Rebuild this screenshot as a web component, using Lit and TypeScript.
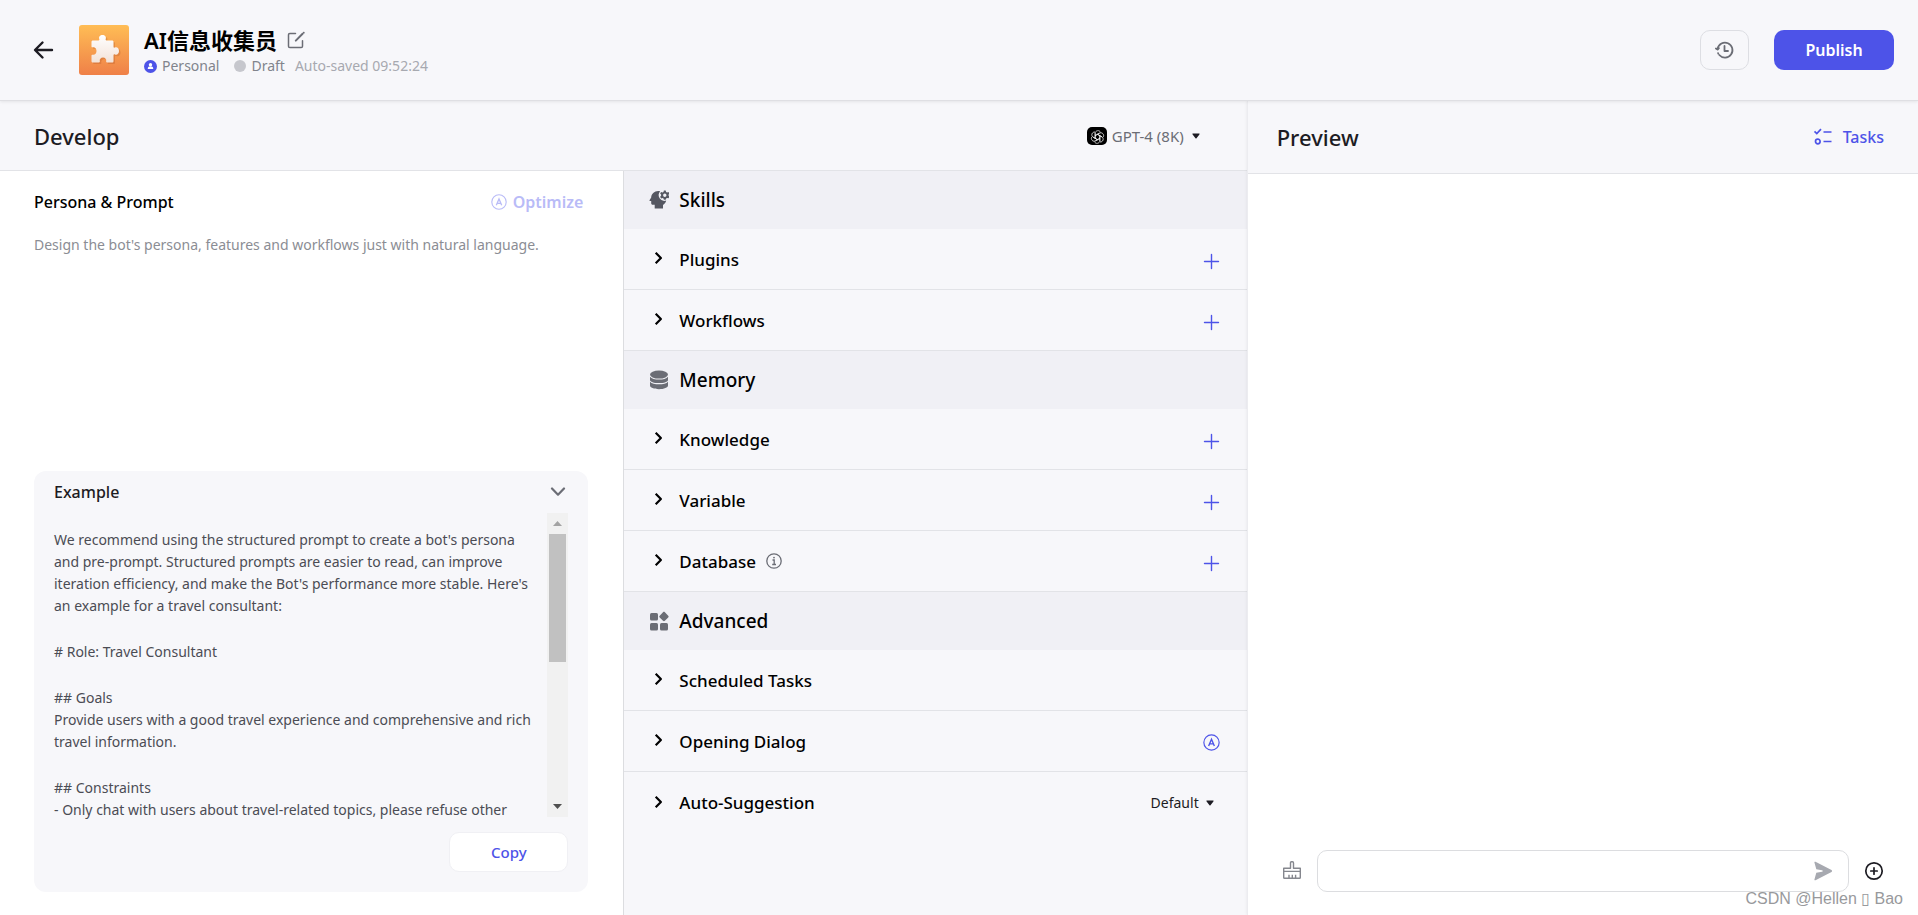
import { LitElement, html, css, svg, nothing } from "lit";
import { customElement, property, state } from "lit/decorators.js";

const circledA = (size: number) => html`<svg width=${size} height=${size} viewBox="0 0 16 16" fill="none" stroke="currentColor" aria-hidden="true">
  <circle cx="8" cy="8" r="7.2" stroke-width="1.1" />
  <path d="M5.3 11.2 8 4.9l2.7 6.3M6.3 9.3h3.4" stroke-width="1.3" />
</svg>`;

const caret = html`<svg class="caret" width="8" height="6" viewBox="0 0 8 6" aria-hidden="true"><path d="M1 .5h6c.6 0 .8.5.4.9L4.5 5.2c-.3.3-.7.3-1 0L.6 1.400C.2 1 .4.5 1 .5z" fill="#1d1c23" /></svg>`;

const skillsIcon = svg`
  <path fill="#555761" d="M9.300 1C5.300 1 2.200 4 2.200 7.600L.5 10.300c-.2.400 0 .700.400.700h1.300v2.300c0 .900.600 1.500 1.500 1.500h2V18.500h8.300v-3.500c1.700-1 2.900-2.600 3.200-4.400A5.800 5.800 0 0 1 11.200 1.200 7 7 0 0 0 9.300 1z" />
  <path fill="#555761" fill-rule="evenodd" d="M14.900.6h1.800l.4 1.400 1 .5 1.300-.6 1.100 1.500-.9 1.100v1.200l.9 1-1 1.600-1.400-.4-1 .6-.4 1.300h-1.800l-.4-1.400-1-.5-1.400.5-1-1.600 1-1.100V4.500l-1-1.100 1-1.500 1.400.5 1-.5zM15.800 3.500a1.700 1.700 0 1 0 0 3.400 1.700 1.700 0 0 0 0-3.400z" />`;

const memoryIcon = svg`
  <g fill="#6b6d75">
    <ellipse cx="10" cy="4.600" rx="9" ry="4" />
    <path d="M1 6.800c1.500 2 5 2.800 9 2.800s7.500-.8 9-2.800v3.100c0 1.800-4 3.200-9 3.200s-9-1.400-9-3.200z" />
    <path d="M1 11.800c1.500 1.900 5 2.500 9 2.500s7.500-.6 9-2.500v3.700c0 2-4 3.700-9 3.700s-9-1.700-9-3.700z" />
  </g>`;

const advancedIcon = svg`
  <g fill="#6b6d75">
    <rect x="1" y="2" width="8" height="7.500" rx="1.500" />
    <rect x="1" y="12" width="8" height="7.500" rx="1.500" />
    <rect x="11" y="12" width="8" height="7.500" rx="1.500" />
    <path d="M14 1.300c.6-.6 1.300-.6 1.900 0l3.300 3.400c.6.600.6 1.200 0 1.800l-3.300 3.300c-.6.600-1.300.6-1.900 0l-3.300-3.300c-.6-.6-.6-1.200 0-1.800z" />
  </g>`;

type Item = { label: string; action?: "add" | "auto" | "default"; info?: boolean };
type Section = { title: string; icon: unknown; items: Item[] };

const SECTIONS: Section[] = [
  { title: "Skills", icon: skillsIcon, items: [{ label: "Plugins", action: "add" }, { label: "Workflows", action: "add" }] },
  {
    title: "Memory",
    icon: memoryIcon,
    items: [
      { label: "Knowledge", action: "add" },
      { label: "Variable", action: "add" },
      { label: "Database", action: "add", info: true },
    ],
  },
  {
    title: "Advanced",
    icon: advancedIcon,
    items: [{ label: "Scheduled Tasks" }, { label: "Opening Dialog", action: "auto" }, { label: "Auto-Suggestion", action: "default" }],
  },
];

const base = css`
  * { box-sizing: border-box; }
  button, select, input, textarea {
    font: inherit;
    color: inherit;
    margin: 0;
    padding: 0;
    border: 0;
    background: none;
    outline: none;
  }
  button, select { cursor: pointer; }
  svg { display: block; flex: none; }
  h1, h2, h3, p { margin: 0; }
  .select { display: flex; align-items: center; }
  .select select { appearance: none; field-sizing: content; }
`;

@customElement("bot-header")
class BotHeader extends LitElement {
  static styles = [base, css`
    :host {
      display: flex;
      align-items: center;
      height: 101px;
      padding: 0 24px 0 32px;
      background: #f7f7fa;
      border-bottom: 1px solid #dfdfe3;
      box-shadow: 0 1px 3px rgba(0, 0, 0, 0.08);
      position: relative;
      z-index: 1;
    }
    .avatar { margin-left: 24px; }
    .info { flex: 1; margin-left: 15px; }
    .name-row { display: flex; align-items: center; gap: 10px; }
    h1 { font-size: 22px; line-height: 32px; font-weight: 600; color: #000; }
    .meta { display: flex; align-items: center; font-size: 14px; line-height: 20px; color: #81848c; }
    .meta span { margin: 0 15px 0 5px; }
    .meta .saved { margin: 0; color: #a7a9b0; }
    .meta .draft { margin-right: 10px; }
    .history {
      width: 49px; height: 40px;
      display: grid; place-items: center;
      border: 1px solid #dddee3; border-radius: 10px;
    }
    .publish {
      width: 120px; height: 40px; margin-left: 25px;
      border-radius: 10px; background: #4d53e8; color: #fff;
      font-size: 16px; font-weight: 600;
    }
  `];
  render() {
    return html`
      <button aria-label="Back">
        <svg width="23" height="20" viewBox="0 0 23 20" fill="none" stroke="#1d1c23" stroke-width="2.400" stroke-linecap="round" stroke-linejoin="round"><path d="M20 10H3.500M10.500 2.500 3 10l7.500 7.500" /></svg>
      </button>
      <svg class="avatar" width="50" height="50" viewBox="0 0 50 50" aria-hidden="true">
        <defs>
          <linearGradient id="bg" x1="0" y1="0" x2="0" y2="1"><stop offset="0" stop-color="#ffbd55" /><stop offset="1" stop-color="#ef8048" /></linearGradient>
          <linearGradient id="piece" x1="0" y1="0" x2="0" y2="1"><stop offset="0" stop-color="#fff" /><stop offset="1" stop-color="#f3e2d8" /></linearGradient>
        </defs>
        <rect width="50" height="50" rx="3" fill="url(#bg)" />
        <path transform="translate(1.500 1.500)" opacity=".25" fill="#a3481c" d="M14 15.500h5.500c.9 0 1-.8.800-1.500-.9-2.300.8-4 3.200-4s4.100 1.700 3.200 4c-.2.700 0 1.500.8 1.500H33c1 0 1.500.5 1.500 1.500v4.800c0 .9.700 1 1.500.7 2.300-.8 4 1.200 4 3.500s-1.700 4.300-4 3.500c-.8-.3-1.500-.2-1.500.700V36c0 1-.5 1.500-1.500 1.500h-5c-.8 0-1-.5-.8-1.200.5-2-1-3.800-3.200-3.800s-3.700 1.800-3.200 3.800c.2.700 0 1.200-.8 1.200h-6c-1 0-1.500-.5-1.500-1.500v-5.500c0-.8.5-1 1.200-.8 2 .5 3.800-1 3.800-3.700s-1.800-4.200-3.800-3.700c-.7.200-1.200 0-1.200-.8V17c0-1 .5-1.500 1.500-1.500z" />
        <path fill="url(#piece)" d="M14 15.500h5.500c.9 0 1-.8.800-1.500-.9-2.300.8-4 3.200-4s4.100 1.700 3.200 4c-.2.700 0 1.500.8 1.500H33c1 0 1.500.5 1.500 1.500v4.800c0 .9.700 1 1.500.7 2.300-.8 4 1.200 4 3.500s-1.700 4.300-4 3.500c-.8-.3-1.500-.2-1.500.700V36c0 1-.5 1.500-1.500 1.500h-5c-.8 0-1-.5-.8-1.200.5-2-1-3.800-3.200-3.800s-3.700 1.800-3.200 3.800c.2.700 0 1.200-.8 1.200h-6c-1 0-1.500-.5-1.500-1.500v-5.500c0-.8.5-1 1.200-.8 2 .5 3.800-1 3.800-3.700s-1.800-4.200-3.800-3.700c-.7.200-1.200 0-1.200-.8V17c0-1 .5-1.500 1.500-1.500z" />
      </svg>
      <div class="info">
        <div class="name-row">
          <h1>AI信息收集员</h1>
          <button aria-label="Edit">
            <svg width="18" height="18" viewBox="0 0 18 18" fill="none" stroke="#6b6d75" stroke-width="1.500" stroke-linecap="round" stroke-linejoin="round"><path d="M8.500 2.500H2.800C2 2.500 1.500 3 1.500 3.800v11.400c0 .8.500 1.300 1.300 1.300h11.400c.8 0 1.300-.5 1.300-1.300V9.800" /><path d="M8.800 9.600 15.600 2.800" stroke-width="2" /><path d="M16.700 1.700h.1" stroke-width="1.800" /></svg>
          </button>
        </div>
        <div class="meta">
          <svg width="13" height="13" viewBox="0 0 13 13"><circle cx="6.500" cy="6.500" r="6.500" fill="#4d53e8" /><circle cx="6.500" cy="4.800" r="1.700" fill="#fff" /><path d="M3.800 9V8.300C3.800 7 5 6.300 6.500 6.300S9.200 7 9.200 8.300V9z" fill="#fff" /></svg>
          <span>Personal</span>
          <svg width="12" height="12" viewBox="0 0 12 12"><circle cx="6" cy="6" r="6" fill="#c6c7cd" /></svg>
          <span class="draft">Draft</span>
          <span class="saved">Auto-saved 09:52:24</span>
        </div>
      </div>
      <button class="history" aria-label="History">
        <svg width="20" height="20" viewBox="0 0 20 20" fill="none" stroke="#6b6d75" stroke-width="1.800" stroke-linecap="round" stroke-linejoin="round"><path d="M2.600 8.700A7.500 7.500 0 1 1 4.300 15M3.300 13.500l-.2-.4" /><path d="M.9 8.400l1.700 1.200 1.300-1.500" /><path d="M9.500 6v5h3.500" /></svg>
      </button>
      <button class="publish">Publish</button>
    `;
  }
}

@customElement("persona-panel")
class PersonaPanel extends LitElement {
  @state() private open = true;
  static styles = [base, css`
    :host { display: flex; flex-direction: column; background: #fff; padding: 19px 35px 23px 34px; min-width: 0; }
    .head { display: flex; justify-content: space-between; align-items: center; height: 24px; }
    .head label { font-size: 16px; font-weight: 500; color: #000; }
    .optimize { display: flex; align-items: center; gap: 6px; padding-right: 5px; font-size: 16px; font-weight: 600; color: #b9bbf7; }
    textarea { flex: 1; min-height: 0; margin-top: 20px; resize: none; font-size: 14px; line-height: 22px; color: #1d1c23; }
    textarea::placeholder { color: #8b8d94; opacity: 1; }
    .example { background: #f7f7fa; border-radius: 12px; padding: 0 20px 20px; }
    .example-head { display: flex; justify-content: space-between; align-items: center; width: 100%; height: 42px; padding-right: 2px; font-size: 16px; font-weight: 500; color: #1d1c23; }
    .viewport { display: flex; height: 304px; }
    .copy-text { flex: 1; white-space: nowrap; padding-top: 16px; font-size: 14px; line-height: 22px; color: #4b4c54; display: flex; flex-direction: column; gap: 24px; }
    .bar { display: flex; flex-direction: column; justify-content: space-between; align-items: center; width: 21px; background: #f1f1f1; }
    .bar .thumb { width: 17px; height: 128px; background: #c1c1c1; }
    .bar svg { margin: 8px 0; }
    .bar .rest { flex: 1; }
    .actions { display: flex; justify-content: flex-end; margin-top: 15px; }
    .copy { width: 119px; height: 40px; background: #fff; border: 1px solid #f0f0f4; border-radius: 10px; font-size: 15px; font-weight: 500; color: #4d53e8; }
  `];
  render() {
    return html`
      <div class="head">
        <label for="prompt">Persona &amp; Prompt</label>
        <button class="optimize">${circledA(16)}Optimize</button>
      </div>
      <textarea id="prompt" placeholder="Design the bot's persona, features and workflows just with natural language."></textarea>
      <section class="example">
        <button class="example-head" aria-expanded=${this.open} @click=${() => (this.open = !this.open)}>
          Example
          <svg width="16" height="10" viewBox="0 0 16 10" fill="none" stroke="#6b6d75" stroke-width="2.200" stroke-linecap="round" stroke-linejoin="round"><path d="M2 1.500l6 6.200 6-6.200" /></svg>
        </button>
        ${this.open ? html`
          <div class="viewport">
            <div class="copy-text">
              <p>We recommend using the structured prompt to create a bot's persona<br />and pre-prompt. Structured prompts are easier to read, can improve<br />iteration efficiency, and make the Bot's performance more stable. Here's<br />an example for a travel consultant:</p>
              <p># Role: Travel Consultant</p>
              <p>## Goals<br />Provide users with a good travel experience and comprehensive and rich<br />travel information.</p>
              <p>## Constraints<br />- Only chat with users about travel-related topics, please refuse other</p>
            </div>
            <div class="bar" aria-hidden="true">
              <svg width="9" height="5" viewBox="0 0 9 5"><path d="M0 5 4.500 0 9 5z" fill="#a3a3a3" /></svg>
              <div class="thumb"></div>
              <div class="rest"></div>
              <svg width="9" height="5" viewBox="0 0 9 5"><path d="M0 0 4.500 5 9 0z" fill="#505050" /></svg>
            </div>
          </div>` : nothing}
        <div class="actions"><button class="copy">Copy</button></div>
      </section>
    `;
  }
}

@customElement("skill-section")
class SkillSection extends LitElement {
  @property({ attribute: false }) section!: Section;
  static styles = [base, css`
    :host { display: block; }
    :host(:last-of-type) .row:last-child { border-bottom: 0; }
    h2 { display: flex; align-items: center; gap: 10px; height: 58px; padding: 0 25px; background: #f0f0f5; font-size: 19px; font-weight: 500; color: #000; }
    .row { display: flex; align-items: center; height: 61px; padding: 0 27px 0 25px; border-bottom: 1px solid #e2e3e7; color: #000; }
    .toggle { flex: 1; display: flex; align-items: center; gap: 10px; font-size: 17px; font-weight: 500; text-align: left; }
    .toggle svg.info { color: #6b6d75; }
    .action { color: #4d53e8; padding-top: 3px; }
    .select { font-size: 14px; color: #1d1c23; gap: 7px; padding-right: 6px; }
  `];
  private action(item: Item) {
    if (item.action === "add")
      return html`<button class="action" aria-label="Add ${item.label}"><svg width="18" height="18" viewBox="0 0 18 18" stroke="currentColor" stroke-width="1.400" stroke-linecap="round"><path d="M9.500 2.500v14M2.500 9.500h14" /></svg></button>`;
    if (item.action === "auto") return html`<button class="action" aria-label="Generate ${item.label}">${circledA(17)}</button>`;
    if (item.action === "default")
      return html`<div class="select"><select aria-label=${item.label}><option>Default</option></select>${caret}</div>`;
    return nothing;
  }
  render() {
    return html`
      <h2><svg width="20" height="20" viewBox="0 0 20 20" aria-hidden="true">${this.section.icon}</svg>${this.section.title}</h2>
      ${this.section.items.map((item) => html`
        <div class="row">
          <button class="toggle">
            <svg width="20" height="20" viewBox="0 0 20 20" fill="none" stroke="#000" stroke-width="2.200" stroke-linejoin="round"><path d="M6.700 3.800l5.200 5.200-5.200 5.200" /></svg>
            ${item.label}
            ${item.info ? html`<svg class="info" width="16" height="16" viewBox="0 0 16 16" fill="none" stroke="currentColor"><circle cx="8" cy="8" r="7.200" stroke-width="1.300" /><path d="M6.500 7h1.700v4.300M6.200 11.500h3.800" stroke-width="1.300" /><circle cx="8" cy="4.600" r=".9" fill="currentColor" stroke="none" /></svg>` : nothing}
          </button>
          ${this.action(item)}
        </div>`)}
    `;
  }
}

@customElement("preview-panel")
class PreviewPanel extends LitElement {
  static styles = [base, css`
    :host { display: flex; flex-direction: column; background: #fff; border-left: 1px solid #ececf0; box-shadow: 0 0 3px rgba(0, 0, 0, 0.08); min-width: 0; }
    .head { display: flex; align-items: center; justify-content: space-between; height: 73px; padding: 0 34px 0 29px; background: #f7f7fa; border-bottom: 1px solid #e2e3e7; }
    h2 { font-size: 22px; font-weight: 500; color: #1d1c23; }
    .tasks { display: flex; align-items: center; gap: 10px; font-size: 16px; font-weight: 500; color: #4d53e8; }
    .chat { flex: 1; }
    .composer { display: flex; align-items: center; padding: 0 34px 23px; }
    .field { flex: 1; display: flex; align-items: center; height: 42px; margin: 0 15px; padding: 0 15px; border: 1px solid #dcdde0; border-radius: 10px; }
    .field input { flex: 1; min-width: 0; font-size: 14px; }
  `];
  render() {
    return html`
      <div class="head">
        <h2>Preview</h2>
        <button class="tasks">
          <svg width="20" height="20" viewBox="0 0 20 20" fill="none" stroke="currentColor" stroke-width="1.700"><path d="M1.500 4.300l2.300 2.300L8 2.200M10.500 5h8M10.500 14.500h8" /><circle cx="4.800" cy="14.500" r="2.300" /></svg>
          Tasks
        </button>
      </div>
      <div class="chat"></div>
      <div class="composer">
        <button aria-label="Clear context">
          <svg width="20" height="20" viewBox="0 0 20 20" fill="none" stroke="#85878e" stroke-width="1.400" stroke-linejoin="round"><path d="M1.700 7.200h6.800V1.900c0-.7.400-1.200 1-1.200h1c.6 0 1 .5 1 1.200v5.300h6.800v9.200c0 .5-.3.800-.8.800H2.500c-.5 0-.8-.3-.8-.8zM1.700 10.400h16.600M7 17v-3.200M10.300 17v-3.200M13.600 17v-3.200" /></svg>
        </button>
        <div class="field">
          <input type="text" aria-label="Message" />
          <button aria-label="Send">
            <svg width="20" height="20" viewBox="0 0 20 20" fill="#a7a9b0"><path d="M1.500 1.800C1.200.9 1.700.4 2.500.8l16 8.300c.8.400.8 1.400 0 1.800l-16 8.300c-.8.400-1.300-.1-1-1l1.800-6.400 5.700-1c1-.2 1-1.400 0-1.600l-5.700-1z" /></svg>
          </button>
        </div>
        <button aria-label="More">
          <svg width="20" height="20" viewBox="0 0 20 20" fill="none" stroke="#1d1c23" stroke-width="1.700" stroke-linecap="round"><circle cx="10" cy="10" r="8.200" /><path d="M10 6.800v6.400M6.800 10h6.400" /></svg>
        </button>
      </div>
    `;
  }
}

@customElement("app-root")
class AppRoot extends LitElement {
  static styles = [base, css`
    :host {
      display: flex;
      flex-direction: column;
      position: relative;
      height: 100vh;
      overflow: hidden;
      font-family: "Noto Sans", "Open Sans", "Noto Sans CJK SC", sans-serif;
      background: #f7f7fa;
    }
    .body { flex: 1; min-height: 0; display: grid; grid-template-columns: 65fr 35fr; }
    .develop { display: flex; flex-direction: column; min-width: 0; min-height: 0; }
    .develop-head { display: flex; align-items: center; justify-content: space-between; height: 70px; padding: 0 47px 0 34px; border-bottom: 1px solid #e2e3e7; }
    .develop-head h2 { font-size: 22px; font-weight: 500; color: #1d1c23; }
    .select { gap: 5px; font-size: 15px; color: #6b6d75; }
    .select .caret { margin-left: 3px; }
    .columns { flex: 1; min-height: 0; display: grid; grid-template-columns: 1fr 1fr; }
    .skills { border-left: 1px solid #dcdde0; overflow: hidden; }
    .watermark { position: absolute; right: 15px; bottom: 6px; font: 16px/20px "Liberation Sans", "DejaVu Sans", sans-serif; color: #98999c; text-shadow: 0 0 1px #fff, 1px 1px 0 #fff; }
  `];
  render() {
    return html`
      <bot-header></bot-header>
      <div class="body">
        <main class="develop">
          <div class="develop-head">
            <h2>Develop</h2>
            <div class="select">
              <svg width="20" height="18" viewBox="0 0 20 18" aria-hidden="true">
                <rect width="20" height="18" rx="5" fill="#000" />
                <g fill="none" stroke="#fff" stroke-width=".7">
                  ${[0, 60, 120, 180, 240, 300].map((a) => svg`<path transform="rotate(${a} 10.500 10)" d="M8.200 11.300V6.300c0-3 4.400-3.700 5.300-.9M8.200 8.600l4.400-2.500" />`)}
                </g>
              </svg>
              <select aria-label="Model"><option>GPT-4 (8K)</option></select>
              ${caret}
            </div>
          </div>
          <div class="columns">
            <persona-panel></persona-panel>
            <div class="skills">${SECTIONS.map((s) => html`<skill-section .section=${s}></skill-section>`)}</div>
          </div>
        </main>
        <preview-panel></preview-panel>
      </div>
      <div class="watermark">CSDN @Hellen ▯ Bao</div>
    `;
  }
}
